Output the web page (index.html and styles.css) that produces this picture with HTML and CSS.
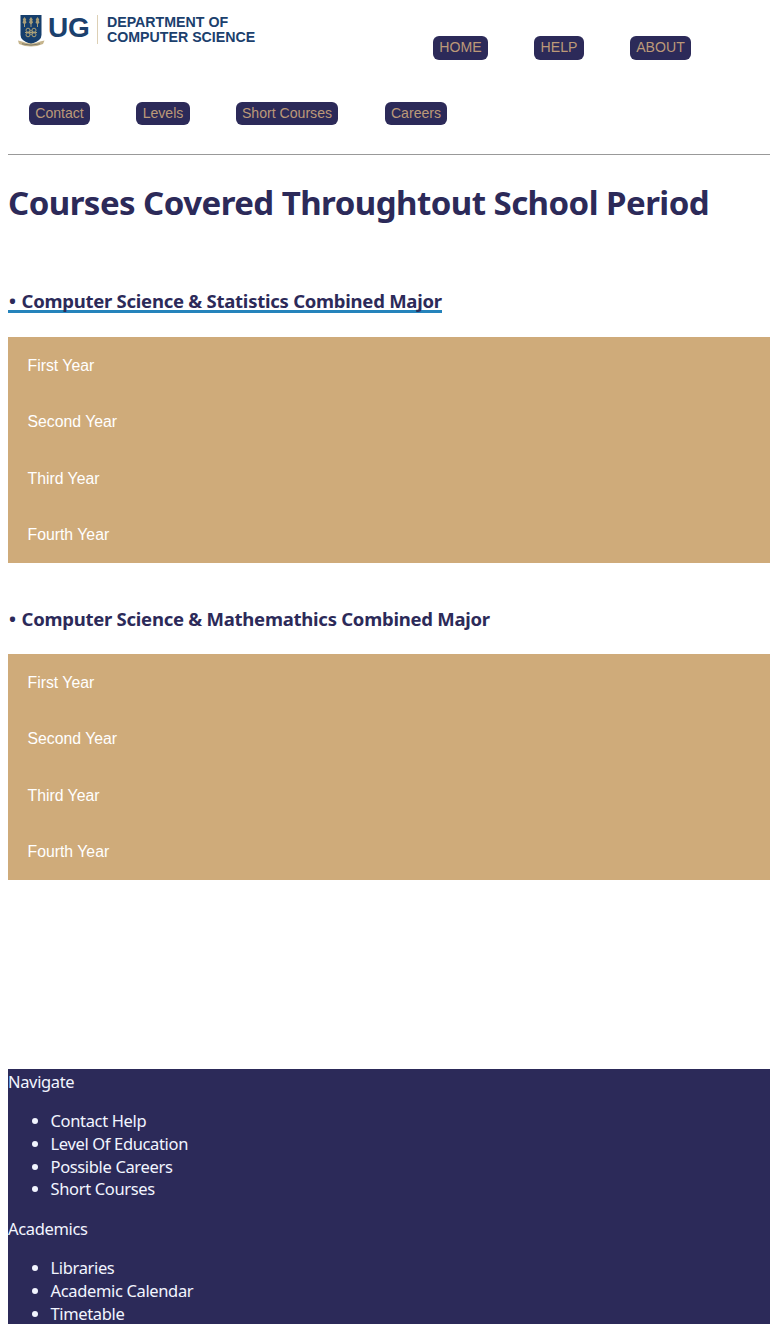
FILE: index.html
```html
<!DOCTYPE html>
<html lang="en">
<head>
<meta charset="utf-8">
<title>Department of Computer Science</title>
<link rel="stylesheet" href="styles.css">
</head>
<body>
<header class="header">
  <div class="top">
    <div class="logo">
      <svg class="crest" viewBox="0 0 27 32" width="27" height="32">
        <path d="M2.500 0H23.500V20Q23.500 26 13 29Q2.500 26 2.500 20Z" fill="#163f6d"/>
        <g fill="#a99e78">
          <path d="M6.500 2L8.300 4.500L7.700 5.500L8.500 7.500L6.500 9.500L4.500 7.500L5.300 5.500L4.700 4.500Z"/>
          <path d="M13 2L14.800 4.500L14.200 5.500L15 7.500L13 9.500L11 7.500L11.800 5.500L11.200 4.500Z"/>
          <path d="M19.500 2L21.300 4.500L20.700 5.500L21.500 7.500L19.500 9.500L17.500 7.500L18.300 5.500L17.700 4.500Z"/>
          <path d="M6 8h1v4H6zM12.500 8h1v4h-1zM19 8h1v4h-1z"/>
        </g>
        <g fill="none" stroke="#aaa078" stroke-width="1">
          <circle cx="13" cy="17.500" r="1.800"/><circle cx="10" cy="15.200" r="2"/><circle cx="16" cy="15.200" r="2"/><circle cx="10" cy="19.800" r="2"/><circle cx="16" cy="19.800" r="2"/>
          <path d="M7 17.500h12"/>
        </g>
        <path d="M0 25.500L4 26.500Q13 30.500 22 26.500L26.500 25.500L25 29Q13 34 1 29Z" fill="#c5b48c"/>
        <path d="M4 28.800Q13 31.500 22 28.800" fill="none" stroke="#6b6b60" stroke-width=".8"/>
      </svg>
      <span class="ug">UG</span>
      <span class="dept"><span class="d1">DEPARTMENT OF</span><span class="d2">COMPUTER SCIENCE</span></span>
    </div>
    <nav class="main-nav"><a class="pill home">HOME</a><a class="pill help">HELP</a><a class="pill about">ABOUT</a></nav>
  </div>
  <nav class="sub-nav"><a class="pill contact">Contact</a><a class="pill levels">Levels</a><a class="pill short">Short Courses</a><a class="pill careers">Careers</a></nav>
</header>
<main>
  <h1 class="title"><span>Courses Covered Throughtout School Period</span></h1>
  <section class="major">
    <h2 class="subtitle stats"><span class="dot">•</span><span class="name">Computer Science &amp; Statistics Combined Major</span></h2>
    <div class="panel"><div class="year">First Year</div><div class="year">Second Year</div><div class="year">Third Year</div><div class="year">Fourth Year</div></div>
  </section>
  <section class="major">
    <h2 class="subtitle maths"><span class="dot">•</span><span class="name">Computer Science &amp; Mathemathics Combined Major</span></h2>
    <div class="panel"><div class="year">First Year</div><div class="year">Second Year</div><div class="year">Third Year</div><div class="year">Fourth Year</div></div>
  </section>
</main>
<footer class="footer">
  <div class="group">Navigate</div>
  <ul class="links"><li>Contact Help</li><li>Level Of Education</li><li>Possible Careers</li><li>Short Courses</li></ul>
  <div class="group">Academics</div>
  <ul class="links"><li>Libraries</li><li>Academic Calendar</li><li>Timetable</li></ul>
</footer>
</body>
</html>
```
FILE: styles.css
```css
* { box-sizing: border-box; }
body { margin: 0; padding-left: 8px; background: #fff; font-family: "Noto Sans", "Open Sans", sans-serif; overflow: hidden; }
.header { height: 155px; border-bottom: 1px solid #999; font-family: "Liberation Sans", Arial, sans-serif; }
.top { display: flex; height: 102px; }
.logo { display: flex; width: 425px; padding: 15px 0 0 10px; color: #1b406d; font-weight: bold; }
.crest { flex: none; }
.ug { margin-left: 3px; margin-top: -2px; font-size: 28px; line-height: 30px; width: 43px; letter-spacing: -0.3px; }
.dept { display: flex; flex-direction: column; height: 29px; margin-left: 6px; padding-left: 9px; border-left: 1px solid #ddd0b5; font-size: 14.2px; line-height: 15px; white-space: nowrap; }
.main-nav { display: flex; padding-top: 36px; }
.sub-nav { display: flex; padding-left: 21px; }
.pill { display: block; height: 23px; line-height: 23px; border-radius: 6px; background: #2c2a59; color: #bc9978; font-size: 14.1px; text-align: center; white-space: nowrap; }
.main-nav .pill { height: 24px; }
.home { width: 55px; margin-right: 46px; }
.help { width: 50px; margin-right: 46px; }
.about { width: 61px; }
.contact { width: 61px; margin-right: 46px; }
.levels { width: 54px; margin-right: 46px; }
.short { width: 102px; margin-right: 47px; }
.careers { width: 62px; }
.title { margin: 24px 0 0; height: 111px; font-size: 33px; line-height: 47px; letter-spacing: -0.540px; color: #2c2a59; white-space: nowrap; }
.major { height: 317px; }
.subtitle { display: flex; width: max-content; height: 23px; margin: 0 0 24px; font-size: 18.500px; line-height: 22px; letter-spacing: -0.250px; color: #2c2a59; white-space: nowrap; }
.stats { border-bottom: 3px solid #2583bb; }
.maths { line-height: 24px; }
.dot { width: 13.500px; padding-left: 1px; }
.panel { height: 226px; padding-left: 19.500px; background: #cfab7a; color: #fff; font-family: "Liberation Sans", Arial, sans-serif; font-size: 15.800px; }
.year { height: 56.400px; line-height: 57px; }
.footer { height: 255px; margin-top: 145px; background: #2c2a59; color: #f2f5ff; font-size: 16.500px; line-height: 22.750px; letter-spacing: -0.350px; }
.group { height: 25px; line-height: 26px; }
.links { margin: 16px 0 15px; padding-left: 42.500px; }
```
